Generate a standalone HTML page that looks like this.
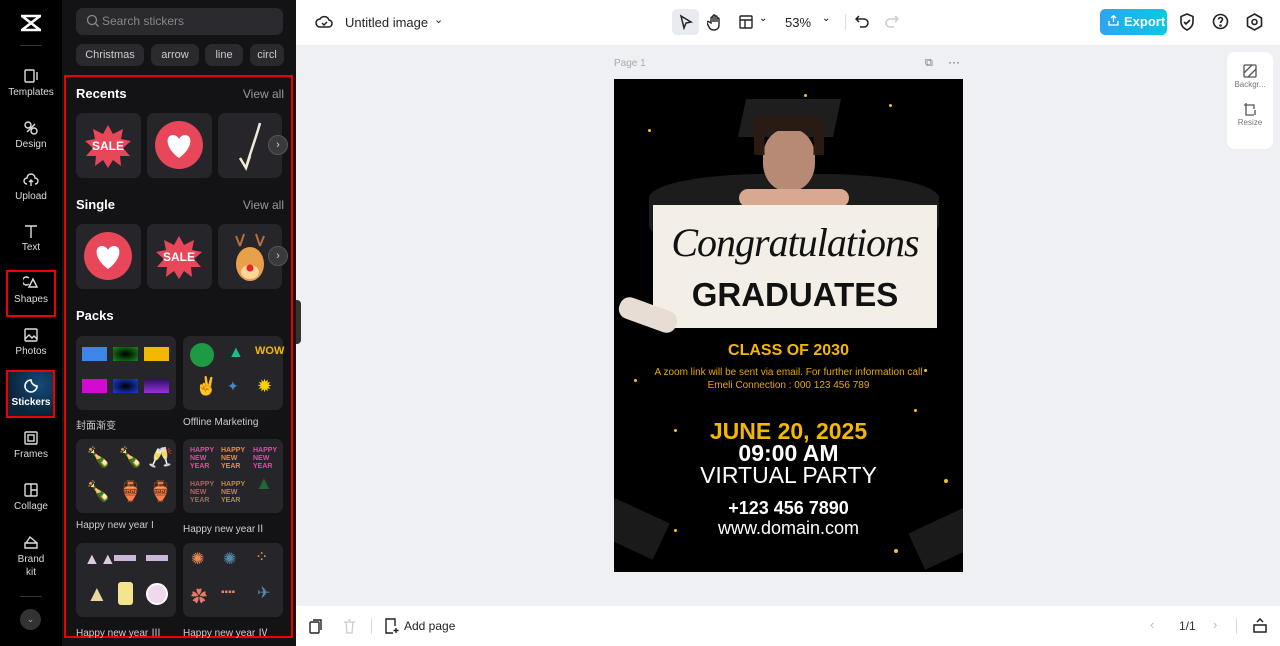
<!DOCTYPE html>
<html><head><meta charset="utf-8"><style>
*{box-sizing:border-box;margin:0;padding:0}
body{width:1280px;height:646px;overflow:hidden;font-family:"Liberation Sans","Noto Sans CJK SC",sans-serif;background:#eef0f3;position:relative}
.abs{position:absolute}
#nav{left:0;top:0;width:62px;height:646px;background:#000}
.ni{position:absolute;left:0;width:62px;text-align:center;color:#ddd;font-size:10px}
.ni svg{display:block;margin:0 auto 3px}
#panel{left:62px;top:0;width:234px;height:646px;background:#131316}
.chip{position:absolute;top:44px;height:22px;border-radius:7px;background:#2a2a2e;color:#ccc;font-size:11px;line-height:22px;text-align:center}
.h{position:absolute;color:#fff;font-weight:bold;font-size:13px}
.va{position:absolute;right:12px;color:#999;font-size:12px}
.tile{position:absolute;width:65px;height:65px;border-radius:7px;background:#26262a;overflow:hidden}
.pk{position:absolute;width:100px;height:74px;border-radius:7px;background:#26262a}
.pl{position:absolute;color:#ccc;font-size:10px}
.sw{position:absolute;width:25px;height:14px}
.arr{position:absolute;width:20px;height:20px;border-radius:50%;background:#3a3a3e;border:1px solid #555;color:#ccc;font-size:11px;line-height:18px;text-align:center}
#top{left:296px;top:0;width:984px;height:45px;background:#fff}
#bot{left:296px;top:606px;width:984px;height:40px;background:#fff}
.dot{position:absolute;border-radius:50%;background:#f6c21a}
</style></head><body>
<div id="nav" class="abs">
 <svg class="abs" style="left:19px;top:13px" width="24" height="20" viewBox="0 0 24 20" fill="none" stroke="#fff" stroke-width="2.6"><path d="M2 3h20M2 17h20M3 3l18 14M21 3L3 17"/></svg>
 <div class="abs" style="left:20px;top:45px;width:22px;height:1px;background:#333"></div>
 <div class="ni" style="top:68px"><svg width="16" height="16" viewBox="0 0 16 16" fill="none" stroke="#ddd" stroke-width="1.4"><rect x="2" y="2" width="9" height="12" rx="1"/><path d="M14 4v8"/></svg>Templates</div>
 <div class="ni" style="top:120px"><svg width="16" height="16" viewBox="0 0 16 16" fill="none" stroke="#ddd" stroke-width="1.4"><circle cx="5" cy="5" r="3"/><circle cx="11" cy="11" r="3"/><path d="M4 12l8-8"/></svg>Design</div>
 <div class="ni" style="top:172px"><svg width="16" height="16" viewBox="0 0 16 16" fill="none" stroke="#ddd" stroke-width="1.4"><path d="M4 12a3 3 0 010-6 4 4 0 018 0 3 3 0 010 6M8 14V8M6 10l2-2 2 2"/></svg>Upload</div>
 <div class="ni" style="top:223px"><svg width="16" height="16" viewBox="0 0 16 16" fill="none" stroke="#ddd" stroke-width="1.4"><path d="M2 3h12M8 3v12"/></svg>Text</div>
 <div class="ni" style="top:275px"><svg width="16" height="16" viewBox="0 0 16 16" fill="none" stroke="#ddd" stroke-width="1.4"><path d="M6 3a4 4 0 100 6M10 4l4 8H6z"/></svg>Shapes</div>
 <div class="abs" style="left:6px;top:270px;width:50px;height:47px;border:2px solid #e00"></div>
 <div class="ni" style="top:327px"><svg width="16" height="16" viewBox="0 0 16 16" fill="none" stroke="#ddd" stroke-width="1.4"><rect x="2" y="2" width="12" height="12" rx="1"/><path d="M2 12l4-4 3 3 2-2 3 3"/></svg>Photos</div>
 <div class="abs" style="left:6px;top:370px;width:49px;height:48px;border:2px solid #e00;background:radial-gradient(circle at 70% 30%,#154a7a,#0a2438 70%)"></div>
 <div class="ni" style="top:378px;color:#fff;font-weight:bold"><svg width="16" height="16" viewBox="0 0 16 16" fill="none" stroke="#fff" stroke-width="1.6"><path d="M14 8A6 6 0 118 2c0 3 3 6 6 6z"/></svg>Stickers</div>
 <div class="ni" style="top:430px"><svg width="16" height="16" viewBox="0 0 16 16" fill="none" stroke="#ddd" stroke-width="1.4"><rect x="2" y="2" width="12" height="12" rx="1"/><rect x="5" y="5" width="6" height="6"/></svg>Frames</div>
 <div class="ni" style="top:482px"><svg width="16" height="16" viewBox="0 0 16 16" fill="none" stroke="#ddd" stroke-width="1.4"><rect x="2" y="2" width="12" height="12" rx="1"/><path d="M8 2v12M8 8h6"/></svg>Collage</div>
 <div class="ni" style="top:534px;line-height:13px"><svg width="16" height="16" viewBox="0 0 16 16" fill="none" stroke="#ddd" stroke-width="1.4"><path d="M2 9h12v5H2zM3 9l4-6 7 6"/></svg>Brand<br>kit</div>
 <div class="abs" style="left:20px;top:596px;width:22px;height:1px;background:#333"></div>
 <div class="abs" style="left:20px;top:609px;width:21px;height:21px;border-radius:50%;background:#333;color:#aaa;font-size:9px;text-align:center;line-height:21px">⌄</div>
</div>
<div id="panel" class="abs">
 <div class="abs" style="left:14px;top:8px;width:207px;height:27px;border-radius:7px;background:#2a2a2e;color:#888;font-size:12px;line-height:27px;padding-left:26px">Search stickers</div>
 <svg class="abs" style="left:24px;top:14px" width="14" height="14" viewBox="0 0 14 14" fill="none" stroke="#888" stroke-width="1.3"><circle cx="6" cy="6" r="4.5"/><path d="M9.5 9.5l3 3"/></svg>
 <div class="chip" style="left:14px;width:68px">Christmas</div>
 <div class="chip" style="left:89px;width:48px">arrow</div>
 <div class="chip" style="left:143px;width:38px">line</div>
 <div class="chip" style="left:188px;width:34px;overflow:hidden">circl</div>
 <div class="abs" style="left:2px;top:75px;width:229px;height:563px;border:2px solid #e00"></div>
 <div class="h" style="left:14px;top:86px">Recents</div><div class="va" style="top:87px">View all</div>
 <div class="tile" style="left:14px;top:113px"><svg width="65" height="65" viewBox="0 0 65 65"><polygon points="32,12 37,21 47,16 45,26 55,28 47,35 54,43 44,43 45,53 37,47 32,55 27,47 19,53 20,43 10,43 17,35 9,28 19,26 17,16 27,21" fill="#e8475a"/><text x="32" y="37" fill="#fff" font-size="12" font-weight="bold" text-anchor="middle" font-family="Liberation Sans">SALE</text></svg></div>
 <div class="tile" style="left:85px;top:113px"><svg width="65" height="65" viewBox="0 0 65 65"><circle cx="32" cy="32" r="24" fill="#e8475a"/><path d="M32 45C18 35 18 22 26 22c3 0 5 2 6 4 1-2 3-4 6-4 8 0 8 13-6 23z" fill="#fff"/></svg></div>
 <div class="tile" style="left:156px;top:113px;width:64px"><svg width="64" height="65" viewBox="0 0 64 65"><path d="M42 10C38 25 32 40 28 55M22 45l6 10 4-12" stroke="#f0ead6" stroke-width="2.5" fill="none"/></svg></div>
 <div class="arr" style="left:206px;top:135px">›</div>
 <div class="h" style="left:14px;top:197px">Single</div><div class="va" style="top:198px">View all</div>
 <div class="tile" style="left:14px;top:224px"><svg width="65" height="65" viewBox="0 0 65 65"><circle cx="32" cy="32" r="24" fill="#e8475a"/><path d="M32 45C18 35 18 22 26 22c3 0 5 2 6 4 1-2 3-4 6-4 8 0 8 13-6 23z" fill="#fff"/></svg></div>
 <div class="tile" style="left:85px;top:224px"><svg width="65" height="65" viewBox="0 0 65 65"><polygon points="32,12 37,21 47,16 45,26 55,28 47,35 54,43 44,43 45,53 37,47 32,55 27,47 19,53 20,43 10,43 17,35 9,28 19,26 17,16 27,21" fill="#e8475a"/><text x="32" y="37" fill="#fff" font-size="12" font-weight="bold" text-anchor="middle" font-family="Liberation Sans">SALE</text></svg></div>
 <div class="tile" style="left:156px;top:224px;width:64px"><svg width="64" height="65" viewBox="0 0 64 65"><path d="M18 12l4 10M26 10l-4 12M46 12l-4 10M38 10l4 12" stroke="#b07040" stroke-width="2"/><ellipse cx="32" cy="40" rx="14" ry="17" fill="#e9a04a"/><ellipse cx="32" cy="48" rx="9" ry="7" fill="#f7d79a"/><circle cx="32" cy="44" r="3.5" fill="#e22"/></svg></div>
 <div class="arr" style="left:206px;top:246px">›</div>
 <div class="h" style="left:14px;top:308px">Packs</div>
 <div class="pk" style="left:14px;top:336px">
  <div class="sw" style="left:6px;top:11px;background:#3b86e8"></div><div class="sw" style="left:37px;top:11px;background:radial-gradient(#000,#1a8a1a)"></div><div class="sw" style="left:68px;top:11px;background:#f5b800"></div>
  <div class="sw" style="left:6px;top:43px;background:#d40ad4"></div><div class="sw" style="left:37px;top:43px;background:radial-gradient(#000,#1a3fe8)"></div><div class="sw" style="left:68px;top:43px;background:linear-gradient(#2a1060,#9a30e0)"></div>
 </div>
 <div class="pl" style="left:14px;top:417px">封面渐变</div>
 <div class="pk" style="left:121px;top:336px">
  <div class="abs" style="left:7px;top:7px;width:24px;height:24px;border-radius:50%;background:#1e9a44"></div>
  <div class="abs" style="left:45px;top:8px;color:#2b8;font-size:16px">▲</div>
  <div class="abs" style="left:72px;top:9px;color:#f5b800;font-size:11px;font-weight:bold">WOW</div>
  <div class="abs" style="left:12px;top:40px;color:#fff;font-size:18px">✌</div>
  <div class="abs" style="left:44px;top:42px;color:#48c;font-size:14px">✦</div>
  <div class="abs" style="left:74px;top:40px;color:#f5d200;font-size:18px">✹</div>
 </div>
 <div class="pl" style="left:121px;top:417px">Offline Marketing</div>
 <div class="pk" style="left:14px;top:439px;color:#e8a040;font-size:20px">
  <div class="abs" style="left:10px;top:6px">🍾</div><div class="abs" style="left:42px;top:6px">🍾</div><div class="abs" style="left:72px;top:6px">🥂</div>
  <div class="abs" style="left:10px;top:40px">🍾</div><div class="abs" style="left:42px;top:40px">🏺</div><div class="abs" style="left:72px;top:40px">🏺</div>
 </div>
 <div class="pl" style="left:14px;top:520px">Happy new year I</div>
 <div class="pk" style="left:121px;top:439px;font-size:7px;font-weight:bold;line-height:8px">
  <div class="abs" style="left:7px;top:8px;color:#e64a9a">HAPPY<br>NEW<br>YEAR</div><div class="abs" style="left:38px;top:8px;color:#e84">HAPPY<br>NEW<br>YEAR</div><div class="abs" style="left:70px;top:8px;color:#e4a">HAPPY<br>NEW<br>YEAR</div>
  <div class="abs" style="left:7px;top:42px;color:#a66">HAPPY<br>NEW<br>YEAR</div><div class="abs" style="left:38px;top:42px;color:#b84">HAPPY<br>NEW<br>YEAR</div><div class="abs" style="left:72px;top:40px;color:#263;font-size:18px">▲</div>
 </div>
 <div class="pl" style="left:121px;top:520px">Happy new yearⅡ</div>
 <div class="pk" style="left:14px;top:543px">
  <div class="abs" style="left:8px;top:8px;color:#dcd;font-size:16px">▲▲</div>
  <div class="abs" style="left:38px;top:12px;width:22px;height:6px;background:#c9b8d8"></div><div class="abs" style="left:70px;top:12px;width:22px;height:6px;background:#c9b8d8"></div>
  <div class="abs" style="left:10px;top:38px;color:#e8d9a0;font-size:22px">▲</div>
  <div class="abs" style="left:42px;top:39px;width:15px;height:23px;border-radius:3px;background:#f3e58c"></div>
  <div class="abs" style="left:70px;top:40px;width:22px;height:22px;border-radius:50%;background:#f0d8ee;border:2px solid #fff"></div>
 </div>
 <div class="pl" style="left:14px;top:624px">Happy new year Ⅲ</div>
 <div class="pk" style="left:121px;top:543px;font-size:16px">
  <div class="abs" style="left:8px;top:6px;color:#e85">✺</div><div class="abs" style="left:40px;top:6px;color:#58a">✺</div><div class="abs" style="left:72px;top:4px;color:#e99a60">⁘</div>
  <div class="abs" style="left:8px;top:40px;color:#e87a6a">✿</div><div class="abs" style="left:38px;top:44px;color:#e8865a;font-size:10px">▪▪▪▪</div><div class="abs" style="left:74px;top:40px;color:#58a">✈</div>
 </div>
 <div class="pl" style="left:121px;top:624px">Happy new year Ⅳ</div>
</div>
<div class="abs" style="left:296px;top:300px;width:5px;height:44px;background:#333;border-radius:0 4px 4px 0"></div>
<div id="top" class="abs">
 <svg class="abs" style="left:19px;top:14px" width="18" height="16" viewBox="0 0 18 16" fill="none" stroke="#222" stroke-width="1.5"><path d="M5 13a4 4 0 010-8 5 5 0 019 1 3.5 3.5 0 01-1 7z"/><path d="M7 9l2 2 3-3"/></svg>
 <div class="abs" style="left:49px;top:15px;font-size:13px;color:#222">Untitled image</div>
 <div class="abs" style="left:138px;top:13px;font-size:11px;color:#222">⌄</div>
 <div class="abs" style="left:376px;top:9px;width:27px;height:26px;border-radius:5px;background:#e8ebef"></div>
 <svg class="abs" style="left:382px;top:14px" width="16" height="16" viewBox="0 0 16 16" fill="none" stroke="#222" stroke-width="1.5"><path d="M3 2l10 6-5 1-2 5z"/></svg>
 <svg class="abs" style="left:411px;top:13px" width="16" height="18" viewBox="0 0 16 18" fill="none" stroke="#222" stroke-width="1.4"><path d="M4 10V5a1 1 0 012 0v4V3a1 1 0 012 0v6V4a1 1 0 012 0v5V6a1 1 0 012 0v6c0 3-2 5-5 5s-4-1-5-3l-2-4a1 1 0 012-1z"/></svg>
 <svg class="abs" style="left:443px;top:15px" width="14" height="14" viewBox="0 0 14 14" fill="none" stroke="#222" stroke-width="1.4"><rect x="1" y="1" width="12" height="12" rx="1"/><path d="M1 5h12M6 5v8"/></svg>
 <div class="abs" style="left:463px;top:13px;font-size:10px">⌄</div>
 <div class="abs" style="left:489px;top:15px;font-size:13px;color:#222">53%</div>
 <div class="abs" style="left:526px;top:13px;font-size:10px">⌄</div>
 <div class="abs" style="left:549px;top:14px;width:1px;height:16px;background:#ddd"></div>
 <svg class="abs" style="left:559px;top:15px" width="14" height="14" viewBox="0 0 14 14" fill="none" stroke="#222" stroke-width="1.5"><path d="M4 1L1 4l3 3M1 4h8a4 4 0 010 8H5"/></svg>
 <svg class="abs" style="left:589px;top:15px" width="14" height="14" viewBox="0 0 14 14" fill="none" stroke="#ccc" stroke-width="1.5"><path d="M10 1l3 3-3 3M13 4H5a4 4 0 000 8h4"/></svg>
 <div class="abs" style="left:804px;top:9px;width:67px;height:26px;border-radius:5px;background:linear-gradient(90deg,#2fa4f0,#0bc8e0);color:#fff;font-weight:bold;font-size:13px;line-height:26px;padding-left:24px">Export</div>
 <svg class="abs" style="left:812px;top:15px" width="11" height="11" viewBox="0 0 11 11" fill="none" stroke="#fff" stroke-width="1.3"><path d="M1 6v4h9V6M5.5 7V1M3 3l2.5-2.5L8 3"/></svg>
 <svg class="abs" style="left:883px;top:13px" width="16" height="18" viewBox="0 0 16 18" fill="none" stroke="#222" stroke-width="1.6"><path d="M8 1l6 2.5V9c0 4-3 6.5-6 8-3-1.5-6-4-6-8V3.5z"/><path d="M5 9l2 2 4-4"/></svg>
 <svg class="abs" style="left:916px;top:13px" width="17" height="17" viewBox="0 0 17 17" fill="none" stroke="#222" stroke-width="1.6"><circle cx="8.5" cy="8.5" r="7"/><path d="M6.5 6.5a2 2 0 114 0c0 1.5-2 1.5-2 3.5"/><circle cx="8.5" cy="12.5" r=".5"/></svg>
 <svg class="abs" style="left:950px;top:13px" width="17" height="18" viewBox="0 0 17 18" fill="none" stroke="#222" stroke-width="1.6"><path d="M8.5 1l7 4v8l-7 4-7-4V5z"/><circle cx="8.5" cy="9" r="2.5"/></svg>
</div>
<div class="abs" style="left:614px;top:58px;font-size:10px;color:#aaa">Page 1</div>
<div class="abs" style="left:925px;top:57px;font-size:11px;color:#777">⧉</div>
<div class="abs" style="left:948px;top:55px;font-size:12px;color:#555">···</div>
<div class="abs" style="left:1227px;top:52px;width:46px;height:97px;border-radius:8px;background:#fff;font-size:8px;color:#777;text-align:center">
 <svg style="display:block;margin:12px auto 2px" width="14" height="14" viewBox="0 0 14 14" fill="none" stroke="#555" stroke-width="1.3"><rect x="1" y="1" width="12" height="12" rx="1"/><path d="M1 9l8-8M5 13l8-8"/></svg>Backgr...
 <svg style="display:block;margin:13px auto 2px" width="14" height="14" viewBox="0 0 14 14" fill="none" stroke="#555" stroke-width="1.3"><path d="M3 1v12h8M1 3h10v4M12 8v5"/></svg>Resize
</div>
<div class="abs" style="left:614px;top:79px;width:349px;height:493px;background:#000;overflow:hidden;font-family:'Liberation Sans',sans-serif">
 <div class="abs" style="left:35px;top:95px;width:290px;height:60px;border-radius:40% 40% 10px 10px;background:#1c1c1c"></div>
 <div class="abs" style="left:128px;top:20px;width:95px;height:38px;background:#1e1e1e;transform:skewX(-12deg)"></div>
 <div class="abs" style="left:149px;top:50px;width:52px;height:62px;border-radius:45%;background:#b68a74"></div>
 <div class="abs" style="left:140px;top:36px;width:70px;height:40px;background:#2a1a14;border-radius:10px 10px 0 0;clip-path:polygon(0 0,100% 0,100% 100%,85% 100%,85% 40%,15% 40%,15% 100%,0 100%)"></div>
 <div class="abs" style="left:125px;top:110px;width:110px;height:18px;border-radius:10px;background:#d8a890"></div>
 <div class="abs" style="left:39px;top:126px;width:284px;height:123px;background:#f3efe6"></div>
 <div class="abs" style="left:39px;top:140px;width:284px;text-align:center;font-family:'Liberation Serif',serif;font-style:italic;font-size:40px;color:#111;letter-spacing:-1px">Congratulations</div>
 <div class="abs" style="left:39px;top:197px;width:284px;text-align:center;font-weight:bold;font-size:33px;color:#111">GRADUATES</div>
 <div class="abs" style="left:4px;top:225px;width:60px;height:22px;border-radius:10px;background:#e8ddd5;transform:rotate(20deg)"></div>
 <div class="abs" style="left:0;top:263px;width:349px;text-align:center;color:#f5b800;font-weight:bold;font-size:16px">CLASS OF 2030</div>
 <div class="abs" style="left:0;top:287px;width:349px;text-align:center;color:#e8a800;font-size:10px;line-height:13px">A zoom link will be sent via email. For further information call<br>Emeli Connection : 000 123 456 789</div>
 <div class="abs" style="left:0;top:339px;width:349px;text-align:center;color:#f5b800;font-weight:bold;font-size:23px">JUNE 20, 2025</div>
 <div class="abs" style="left:0;top:361px;width:349px;text-align:center;color:#fff;font-weight:bold;font-size:23px">09:00 AM</div>
 <div class="abs" style="left:0;top:383px;width:349px;text-align:center;color:#fff;font-size:23px">VIRTUAL PARTY</div>
 <div class="abs" style="left:0;top:419px;width:349px;text-align:center;color:#fff;font-weight:bold;font-size:18px">+123 456 7890</div>
 <div class="abs" style="left:0;top:439px;width:349px;text-align:center;color:#fff;font-size:18px">www.domain.com</div>
 <div class="abs" style="left:-10px;top:430px;width:60px;height:40px;background:#1a1a1a;transform:rotate(25deg)"></div>
 <div class="abs" style="left:300px;top:440px;width:60px;height:40px;background:#1a1a1a;transform:rotate(-25deg)"></div>
 <div class="dot" style="left:20px;top:300px;width:3px;height:3px"></div><div class="dot" style="left:60px;top:350px;width:3px;height:3px"></div><div class="dot" style="left:300px;top:330px;width:3px;height:3px"></div><div class="dot" style="left:330px;top:400px;width:4px;height:4px"></div><div class="dot" style="left:280px;top:470px;width:4px;height:4px"></div><div class="dot" style="left:60px;top:450px;width:3px;height:3px"></div><div class="dot" style="left:240px;top:500px;width:3px;height:3px"></div><div class="dot" style="left:190px;top:15px;width:3px;height:3px"></div><div class="dot" style="left:275px;top:25px;width:3px;height:3px"></div><div class="dot" style="left:34px;top:50px;width:3px;height:3px"></div><div class="dot" style="left:310px;top:290px;width:3px;height:3px"></div>
</div>
<div id="bot" class="abs">
 <svg class="abs" style="left:13px;top:13px" width="14" height="15" viewBox="0 0 14 15" fill="none" stroke="#222" stroke-width="1.4"><rect x="1" y="3" width="9" height="11" rx="1"/><path d="M4 1h8v10"/></svg>
 <svg class="abs" style="left:47px;top:13px" width="13" height="15" viewBox="0 0 13 15" fill="none" stroke="#ccc" stroke-width="1.3"><path d="M1 3h11M3 3l1 11h5l1-11M5 1h3"/></svg>
 <div class="abs" style="left:75px;top:12px;width:1px;height:16px;background:#ddd"></div>
 <svg class="abs" style="left:89px;top:12px" width="14" height="16" viewBox="0 0 14 16" fill="none" stroke="#222" stroke-width="1.4"><path d="M10 8V1H1v14h7M11 10v5M8.5 12.5h5"/></svg>
 <div class="abs" style="left:108px;top:13px;font-size:12px;color:#222">Add page</div>
 <div class="abs" style="left:854px;top:11px;font-size:13px;color:#bbb">‹</div>
 <div class="abs" style="left:883px;top:13px;font-size:12px;color:#333">1/1</div>
 <div class="abs" style="left:917px;top:11px;font-size:13px;color:#bbb">›</div>
 <div class="abs" style="left:940px;top:12px;width:1px;height:16px;background:#ddd"></div>
 <svg class="abs" style="left:957px;top:12px" width="14" height="16" viewBox="0 0 14 16" fill="none" stroke="#222" stroke-width="1.5"><rect x="1" y="7" width="12" height="7"/><path d="M4 4l3-3 3 3"/></svg>
</div>
</body></html>
